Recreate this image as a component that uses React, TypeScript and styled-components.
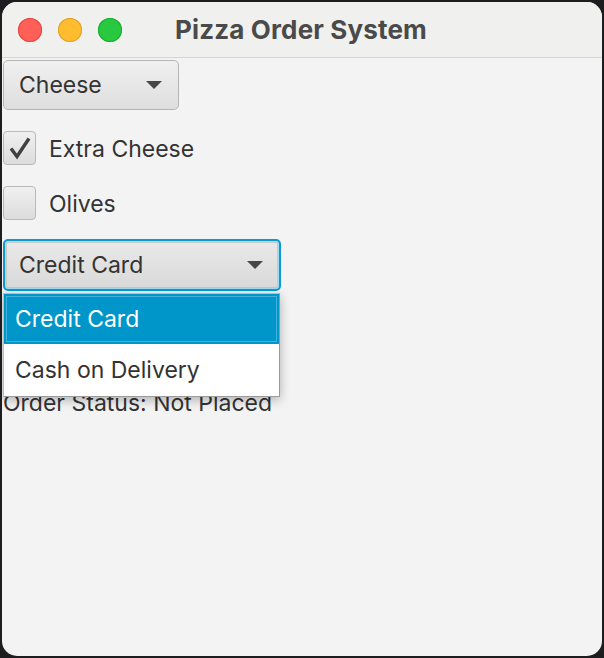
import React from "react";
import styled, { createGlobalStyle } from "styled-components";

const Global = createGlobalStyle`
  html, body { margin: 0; padding: 0; background: #1d1d1f; }
  body { font-family: Inter, "Open Sans", "Liberation Sans", sans-serif; }
`;

const Window = styled.div`
  margin: 2px 2px 0 2px;
  width: 600px;
  height: 654px;
  border-radius: 15px;
  overflow: hidden;
  background: #f3f3f3;
  display: flex;
  flex-direction: column;
`;

const TitleBar = styled.div`
  height: 55px;
  flex: none;
  background: #f0f0ee;
  border-bottom: 1px solid #d4d4d2;
  display: flex;
  align-items: center;
  position: relative;
  padding-left: 16px;
  gap: 16px;
`;

const Light = styled.span<{ $c: string; $b: string }>`
  width: 24px;
  height: 24px;
  border-radius: 50%;
  background: ${(p) => p.$c};
  box-shadow: inset 0 0 0 1px ${(p) => p.$b};
`;

const Title = styled.div`
  position: absolute;
  left: 173px;
  top: 12px;
  font-size: 26px;
  font-weight: 700;
  color: #4a4a4a;
  letter-spacing: 0.15px;
`;

const Content = styled.div`
  position: relative;
  padding: 2px 0 0 1px;
  display: flex;
  flex-direction: column;
  align-items: flex-start;
  color: #333;
  font-size: 23px;
`;

const ComboBox = styled.div<{ $w: number; $focused?: boolean; $mt: number }>`
  box-sizing: border-box;
  width: ${(p) => p.$w}px;
  height: ${(p) => (p.$focused ? 52 : 50)}px;
  margin-top: ${(p) => p.$mt}px;
  border-radius: 5px;
  border: ${(p) => (p.$focused ? "2px solid #0a9bd2" : "1.5px solid #b5b5b5")};
  background: ${(p) =>
    p.$focused
      ? "linear-gradient(#e9e9e9, #d9d9d9)"
      : "linear-gradient(#f0f0f0, #dedede)"};
  box-shadow: ${(p) =>
    p.$focused ? "inset 0 0 0 1px #a6dcf0, inset 0 0 0 2px #c9c9c9" : "none"};
  display: flex;
  align-items: center;
  justify-content: space-between;
  padding: 0 16px 0 ${(p) => (p.$focused ? 14 : 15)}px;
`;

const ComboText = styled.span`
  font-size: 23px;
  color: #333;
  line-height: 1;
`;

const Arrow = styled.span`
  width: 0;
  height: 0;
  border-left: 8.5px solid transparent;
  border-right: 8.5px solid transparent;
  border-top: 8px solid #474747;
`;

const CheckRow = styled.div<{ $mt: number }>`
  display: flex;
  align-items: center;
  gap: 13px;
  margin-top: ${(p) => p.$mt}px;
`;

const Box = styled.span`
  box-sizing: border-box;
  width: 33px;
  height: 34px;
  border-radius: 4px;
  border: 1.5px solid #b9b9b9;
  background: linear-gradient(#f0f0f0, #dcdcdc);
  display: flex;
  align-items: center;
  justify-content: center;
`;

const CheckLabel = styled.span`
  font-size: 23px;
  color: #333;
  padding-top: 2px;
`;

const Status = styled.div`
  margin-top: 98px;
  font-size: 23px;
  color: #333;
  line-height: 29px;
`;

const Popup = styled.div`
  position: absolute;
  left: 1px;
  top: 235px;
  width: 277px;
  background: #fff;
  border: 1px solid #bdbdbd;
  border-right-color: #9a9a9a;
  border-bottom-color: #9a9a9a;
  box-shadow: 0 3px 10px rgba(0, 0, 0, 0.28);
  box-sizing: border-box;
`;

const Item = styled.div<{ $sel?: boolean }>`
  height: ${(p) => (p.$sel ? 50 : 52)}px;
  display: flex;
  align-items: center;
  padding-left: 11px;
  font-size: 23px;
  color: ${(p) => (p.$sel ? "#fff" : "#333")};
  background: ${(p) => (p.$sel ? "#0096c9" : "#fff")};
  box-shadow: ${(p) =>
    p.$sel ? "inset 0 0 0 2px #0096c9, inset 0 0 0 3px #3fb2dd" : "none"};
`;

export default function App() {
  return (
    <>
      <Global />
      <Window>
        <TitleBar>
          <Light $c="#fe5f57" $b="#e2463f" />
          <Light $c="#febc2e" $b="#e0a02a" />
          <Light $c="#28c840" $b="#1aab2b" />
          <Title>Pizza Order System</Title>
        </TitleBar>
        <Content>
          <ComboBox $w={176} $mt={0}>
            <ComboText>Cheese</ComboText>
            <Arrow />
          </ComboBox>
          <CheckRow $mt={21}>
            <Box>
              <svg width="26" height="26" viewBox="0 0 26 26">
                <path
                  d="M4 13.5 L10 21.5 L22 3.5"
                  fill="none"
                  stroke="#404040"
                  strokeWidth="3.4"
                  strokeLinejoin="miter"
                />
              </svg>
            </Box>
            <CheckLabel>Extra Cheese</CheckLabel>
          </CheckRow>
          <CheckRow $mt={21}>
            <Box />
            <CheckLabel>Olives</CheckLabel>
          </CheckRow>
          <ComboBox $w={278} $focused $mt={19}>
            <ComboText>Credit Card</ComboText>
            <Arrow />
          </ComboBox>
          <Status>Order Status: Not Placed</Status>
          <Popup>
            <Item $sel>Credit Card</Item>
            <Item>Cash on Delivery</Item>
          </Popup>
        </Content>
      </Window>
    </>
  );
}
